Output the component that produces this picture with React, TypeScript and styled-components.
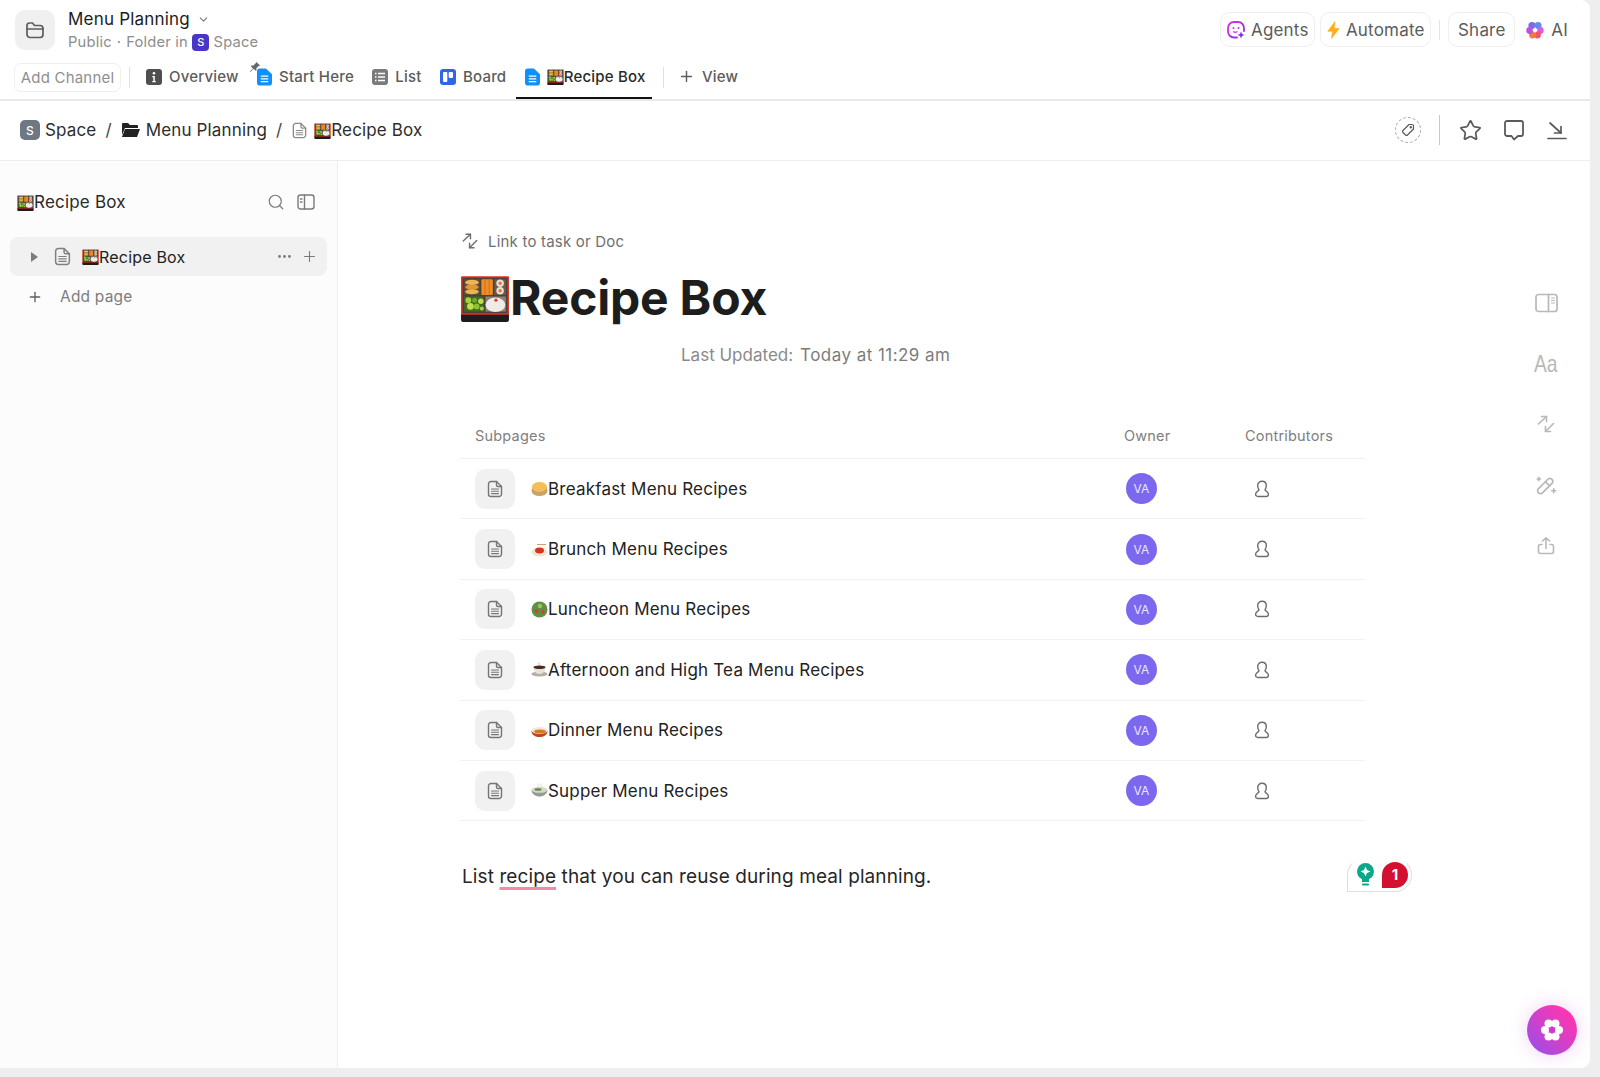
import React from 'react'
import styled, { createGlobalStyle } from 'styled-components'
import { ChevronDown, Ellipsis, Plus, Search, Star } from 'lucide-react'

const GlobalStyle = createGlobalStyle`
  html, body { margin: 0; padding: 0; background: #eeeeee; }
  body { font-family: Inter, "Liberation Sans", sans-serif; color: #1f1f1f; letter-spacing: 0.2px; }
  * { box-sizing: border-box; }
`

const Frame = styled.div`
  position: relative;
  width: 1590px;
  height: 1068px;
  background: #fff;
  border-radius: 0 9px 9px 0;
  display: flex;
  flex-direction: column;
  overflow: hidden;
`

const Header = styled.header`
  height: 101px;
  flex: none;
  border-bottom: 2px solid #e8e8e8;
  display: flex;
  flex-direction: column;
`

const TopRow = styled.div`
  height: 60px;
  display: flex;
  align-items: flex-start;
  padding: 10px 22px 0 15px;
`

const FolderBox = styled.div`
  width: 40px;
  height: 40px;
  border-radius: 10px;
  background: #f0f0f0;
  color: #5d5d5d;
  display: flex;
  align-items: center;
  justify-content: center;
`

const TitleBlock = styled.div`
  margin-left: 13px;
  margin-top: -2px;
  flex: 1;
`

const TitleLine = styled.div`
  display: flex;
  align-items: center;
  gap: 7px;
  height: 22px;
  font-size: 17px;
  font-weight: 400;
  color: #1c1c1c;
  svg { color: #777; }
`

const SubLine = styled.div`
  display: flex;
  align-items: center;
  height: 20px;
  margin-top: 2px;
  font-size: 14.7px;
  color: #8d8d8d;
`

const Dot = styled.span`
  margin: 0 5px;
`

const SpaceBadge = styled.span<{ $size: number; $bg: string }>`
  display: inline-flex;
  align-items: center;
  justify-content: center;
  width: ${({ $size }) => $size}px;
  height: ${({ $size }) => $size}px;
  border-radius: ${({ $size }) => Math.round($size / 4)}px;
  background: ${({ $bg }) => $bg};
  color: #fff;
  font-size: ${({ $size }) => Math.round($size * 0.62)}px;
  font-weight: 500;
  letter-spacing: 0;
  flex: none;
`

const TopActions = styled.div`
  display: flex;
  align-items: center;
  gap: 5px;
  margin-top: 2px;
`

const OutlineButton = styled.div<{ $width: number }>`
  width: ${({ $width }) => $width}px;
  height: 35px;
  border: 1px solid #efefef;
  border-radius: 10px;
  display: flex;
  align-items: center;
  justify-content: center;
  gap: 6px;
  font-size: 17px;
  color: #5c5c5c;
`

const ActionBar = styled.span`
  width: 1px;
  height: 20px;
  margin: 0 3px;
  background: #e4e4e4;
  flex: none;
`

const AiLabel = styled.div`
  display: flex;
  align-items: center;
  gap: 7px;
  margin-left: 6px;
  font-size: 17px;
  color: #5c5c5c;
`

const TabRow = styled.nav`
  height: 39px;
  display: flex;
  align-items: stretch;
  padding-left: 14px;
`

const AddChannel = styled.div`
  width: 107px;
  height: 29px;
  margin-top: 3px;
  border: 1px solid #efefef;
  border-radius: 7px;
  display: flex;
  align-items: center;
  justify-content: center;
  font-size: 15px;
  color: #8f8f8f;
`

const TabBar = styled.span`
  width: 1px;
  height: 21px;
  margin: 7px 7px 0 8px;
  background: #e0e0e0;
  flex: none;
`

const Tab = styled.div<{ $active?: boolean }>`
  position: relative;
  display: flex;
  align-items: center;
  gap: 7px;
  padding: 0 6px 6px 9px;
  margin-right: 3.400px;
  height: 39px;
  font-size: 15px;
  font-weight: 500;
  color: ${({ $active }) => ($active ? '#2a2a2a' : '#5c5c5c')};
  box-shadow: ${({ $active }) => ($active ? 'inset 0 -2px 0 #111' : 'none')};
`

const ViewTab = styled(Tab)`
  padding-left: 7px;
`

const Inline = styled.span`
  display: inline-flex;
  align-items: center;
`

const PinMark = styled.svg`
  position: absolute;
  left: 1px;
  top: 1px;
`

const Breadcrumbs = styled.div`
  height: 60px;
  flex: none;
  border-bottom: 1px solid #eeeeee;
  display: flex;
  align-items: center;
  padding: 0 12px 1px 20px;
  font-size: 17px;
  letter-spacing: 0.15px;
  color: #2d2d2d;
`

const Crumb = styled.span`
  display: inline-flex;
  align-items: center;
  gap: 5px;
`

const DocCrumb = styled(Crumb)`
  gap: 6px;
`

const Slash = styled.span`
  margin: 0 9px;
  color: #444;
`

const CrumbActions = styled.div`
  margin-left: auto;
  display: flex;
  align-items: center;
  color: #5a5a5a;
`

const TagCircle = styled.div`
  width: 26px;
  height: 26px;
  border: 1px dashed #a8a8a8;
  border-radius: 50%;
  display: flex;
  align-items: center;
  justify-content: center;
  color: #5a5a5a;
`

const CrumbBar = styled.span`
  width: 1px;
  height: 30px;
  margin: 0 9px 0 18px;
  background: #c9c9c9;
  flex: none;
`

const CrumbIcon = styled.div`
  width: 43px;
  display: flex;
  justify-content: center;
`

const Body = styled.div`
  flex: 1;
  display: flex;
  min-height: 0;
`

const Sidebar = styled.aside`
  width: 338px;
  flex: none;
  background: #fcfcfc;
  border-right: 1px solid #eeeeee;
  padding: 30px 10px 0;
`

const SideHead = styled.div`
  height: 22px;
  display: flex;
  align-items: center;
  padding: 0 12px 0 7px;
  font-size: 17px;
  color: #2a2a2a;
  margin-bottom: 24px;
`

const SideHeadIcons = styled.div`
  margin-left: auto;
  display: flex;
  gap: 12px;
  color: #7a7a7a;
`

const PageRow = styled.div`
  width: 317px;
  height: 39px;
  border-radius: 8px;
  background: #f1f1f1;
  display: flex;
  align-items: center;
  padding: 0 9px 0 21px;
  font-size: 16px;
  color: #222;
`

const Caret = styled.span`
  width: 0;
  height: 0;
  border-left: 7px solid #7c7c7c;
  border-top: 5.5px solid transparent;
  border-bottom: 5.5px solid transparent;
  margin-right: 15px;
`

const PageTitle = styled.span`
  display: inline-flex;
  align-items: center;
  margin-left: 10px;
`

const RowTools = styled.div`
  margin-left: auto;
  display: flex;
  align-items: center;
  gap: 8px;
  color: #7a7a7a;
`

const AddPage = styled.div`
  height: 41px;
  display: flex;
  align-items: center;
  gap: 17px;
  padding-left: 17px;
  font-size: 15.5px;
  color: #7d7d7d;
  svg { color: #5e5e5e; }
`

const Main = styled.main`
  flex: 1;
  padding: 69px 0 0 122px;
  min-width: 0;
`

const LinkRow = styled.div`
  height: 22px;
  display: flex;
  align-items: center;
  gap: 9px;
  padding-left: 1px;
  font-size: 15px;
  color: #6f6f6f;
`

const PageHeading = styled.h1`
  margin: 14px 0 0;
  height: 62px;
  display: flex;
  align-items: center;
  font-size: 48px;
  font-weight: 700;
  letter-spacing: -0.2px;
  color: #1d1d1d;
`

const Updated = styled.div`
  margin: 15px 0 0 221px;
  height: 24px;
  display: flex;
  align-items: center;
  gap: 7px;
  font-size: 17px;
  letter-spacing: 0;
  color: #8a8a8a;
  span + span { color: #7c7c7c; letter-spacing: 0.45px; }
`

const Table = styled.div`
  width: 905px;
  margin-top: 56px;
`

const tableColumns = `grid-template-columns: 1fr 121px 120px;`

const TableHead = styled.div`
  height: 36px;
  display: grid;
  ${tableColumns}
  align-items: start;
  padding-left: 15px;
  padding-top: 4px;
  font-size: 14.5px;
  color: #808080;
  border-bottom: 1px solid #f1f1f1;
`

const TableRow = styled.div`
  height: 60.4px;
  display: grid;
  ${tableColumns}
  align-items: center;
  padding-left: 15px;
  border-bottom: 1px solid #f1f1f1;
`

const PageCell = styled.div`
  display: flex;
  align-items: center;
  font-size: 17px;
  color: #222;
`

const DocBox = styled.div`
  width: 40px;
  height: 40px;
  border-radius: 10px;
  background: #f1f1f1;
  color: #757575;
  display: flex;
  align-items: center;
  justify-content: center;
  margin-right: 16px;
`

const Avatar = styled.div`
  width: 31px;
  height: 31px;
  margin-left: 2px;
  border-radius: 50%;
  background: #7b68ee;
  color: #e9e6ff;
  font-size: 12px;
  display: flex;
  align-items: center;
  justify-content: center;
`

const Contributor = styled.div`
  padding-left: 9px;
  color: #6c6c6c;
  display: flex;
`

const Paragraph = styled.p`
  position: relative;
  width: 960px;
  margin: 43px 0 0 2px;
  line-height: 26px;
  font-size: 19px;
  letter-spacing: 0.1px;
  color: #262626;
`

const Misspelled = styled.span`
  text-decoration: underline 3px #f58aa6;
  text-underline-offset: 4px;
  text-decoration-skip-ink: none;
`

const GrammarBadge = styled.div`
  position: absolute;
  left: 885px;
  top: -6px;
  width: 65px;
  height: 34px;
  background: #fff;
  border: 1px solid #dcdfe8;
  border-top-color: transparent;
  border-radius: 17px 17px 17px 0;
  display: flex;
  align-items: center;
  gap: 8px;
  padding-left: 9px;
`

const Count = styled.div`
  width: 26px;
  height: 26px;
  background: #d3102f;
  border-radius: 13px 13px 13px 0;
  color: #fff;
  font-size: 15px;
  font-weight: 700;
  display: flex;
  align-items: center;
  justify-content: center;
`

const Rail = styled.aside`
  width: 88px;
  flex: none;
  padding-top: 132px;
  display: flex;
  flex-direction: column;
  align-items: center;
  gap: 40.7px;
  color: #b8b8b8;
`

const RailSlot = styled.div`
  height: 20px;
  display: flex;
  align-items: center;
  justify-content: center;
`

const RailText = styled(RailSlot)`
  font-family: "Liberation Sans", sans-serif;
  font-size: 24px;
  letter-spacing: 0;
  transform: scaleX(0.8);
`

const Fab = styled.div`
  position: absolute;
  left: 1527px;
  top: 1005px;
  width: 50px;
  height: 50px;
  border-radius: 50%;
  background: linear-gradient(45deg, #9a4de8 5%, #ff36b0 85%);
  box-shadow: 0 0 18px rgba(200, 70, 220, 0.25);
  display: flex;
  align-items: center;
  justify-content: center;
`

const stroke = {
  fill: 'none',
  stroke: 'currentColor',
  strokeLinecap: 'round' as const,
  strokeLinejoin: 'round' as const,
}

const FolderIcon = () => (
  <svg width="22" height="22" viewBox="0 0 22 22" {...stroke} strokeWidth="1.7">
    <path d="M3 6.5A2.5 2.5 0 0 1 5.500 4h3l2 2.500h5.500A3 3 0 0 1 19 9.500v6a3 3 0 0 1-3 3H6a3 3 0 0 1-3-3z" />
    <path d="M3 10h16" />
  </svg>
)

const DocIcon = ({ size = 18, color }: { size?: number; color?: string }) => (
  <svg width={size} height={size} viewBox="0 0 18 18" color={color} {...stroke} strokeWidth="1.4">
    <path d="M5 1.500h5.500L15.500 6.500V14a2.500 2.500 0 0 1-2.500 2.500H5A2.500 2.500 0 0 1 2.500 14V4A2.500 2.500 0 0 1 5 1.500z" />
    <path d="M10.500 1.500V5A1.500 1.500 0 0 0 12 6.500h3.500" />
    <path d="M5.500 9h7M5.500 11.300h7M5.500 13.600h7" strokeWidth="1.100" />
  </svg>
)

const LinkArrows = ({ size = 18 }: { size?: number }) => (
  <svg width={size} height={size} viewBox="0 0 20 20" {...stroke} strokeWidth="1.6">
    <path d="M2.500 10 L10.500 2.500" />
    <path d="M5.500 2.500h5v5" />
    <path d="M17.500 9.500 L9.500 17.500" />
    <path d="M14.500 17.500h-5v-5" />
  </svg>
)

const PersonIcon = () => (
  <svg width="16" height="18" viewBox="0 0 16 18" {...stroke} strokeWidth="1.4">
    <path d="M5 9.500C3.800 8.300 3.700 6.800 3.700 5.500 3.700 3 5.600 1.300 8 1.300S12.300 3 12.300 5.500c0 1.300-.1 2.800-1.300 4 0 1 .8 1.400 2 2.300 1 .8 1.400 1.500 1.400 2.500 0 1.300-.8 2.200-2.200 2.200H3.800c-1.400 0-2.200-.9-2.200-2.200 0-1 .4-1.700 1.400-2.500 1.200-.9 2-1.300 2-2.300z" />
  </svg>
)

const TabDoc = () => (
  <svg width="15" height="18" viewBox="0 0 16 18">
    <path d="M3 0h6.500L16 6v9a3 3 0 0 1-3 3H3a3 3 0 0 1-3-3V3a3 3 0 0 1 3-3z" fill="#1090ff" />
    <path d="M4 8h8M4 11h8M4 14h8" stroke="#fff" strokeWidth="1.400" />
  </svg>
)

const OverviewIcon = () => (
  <svg width="16" height="16" viewBox="0 0 16 16">
    <rect width="16" height="16" rx="3" fill="#4f4f4f" />
    <circle cx="8" cy="4.300" r="1.300" fill="#fff" />
    <path d="M6.300 7h2.500v5h1v1.300H6.300V12h1V8.300h-1z" fill="#fff" />
  </svg>
)

const ListIcon = () => (
  <svg width="16" height="16" viewBox="0 0 16 16">
    <rect width="16" height="16" rx="3" fill="#7b7b7b" />
    <path d="M3 4.500h1.500M6 4.500h7M3 8h1.500M6 8h7M3 11.500h1.500M6 11.500h7" stroke="#fff" strokeWidth="1.400" />
  </svg>
)

const BoardIcon = () => (
  <svg width="16" height="16" viewBox="0 0 16 16">
    <rect width="16" height="16" rx="3" fill="#3264e6" />
    <rect x="3" y="3" width="4.300" height="10" rx="1" fill="#fff" />
    <rect x="8.700" y="3" width="4.300" height="6" rx="1" fill="#fff" />
  </svg>
)

const AgentIcon = () => (
  <svg width="18" height="18" viewBox="0 0 18 18" fill="none">
    <defs>
      <linearGradient id="agentGrad" x1="0" y1="0" x2="1" y2="1">
        <stop offset="0" stopColor="#e62ae6" />
        <stop offset="1" stopColor="#8a2cf0" />
      </linearGradient>
    </defs>
    <path d="M10 16.500H7A6 6 0 0 1 1 10.500V7a6 6 0 0 1 6-6h4a6 6 0 0 1 6 6v3" stroke="url(#agentGrad)" strokeWidth="1.800" strokeLinecap="round" />
    <circle cx="6.500" cy="7" r="1" fill="#d62ae6" />
    <circle cx="11.500" cy="7" r="1" fill="#d62ae6" />
    <path d="M6.500 10.800c1 .7 2.500.7 3.500 0" stroke="#d62ae6" strokeWidth="1.300" strokeLinecap="round" />
    <path d="M14 10.500l1 2.500 2.500 1-2.500 1-1 2.500-1-2.500-2.500-1 2.500-1z" fill="#7c2cf0" />
  </svg>
)

const BoltIcon = () => (
  <svg width="13" height="18" viewBox="0 0 13 18">
    <path d="M8 .5L.8 10.300h4.700L4.500 17.500l7.700-10H7.300z" fill="#ffae1a" stroke="#ffae1a" strokeWidth=".6" strokeLinejoin="round" />
  </svg>
)

const AiFlower = () => (
  <svg width="18" height="18" viewBox="0 0 18 18">
    <circle cx="6" cy="4.500" r="3.600" fill="#7b68ee" />
    <circle cx="12" cy="4.500" r="3.600" fill="#5b8ef0" />
    <circle cx="14.300" cy="9.500" r="3.400" fill="#d65ce0" />
    <circle cx="11.500" cy="14" r="3.400" fill="#f0566a" />
    <circle cx="6.500" cy="14" r="3.400" fill="#f07a3c" />
    <circle cx="3.700" cy="9.500" r="3.400" fill="#c04fe0" />
    <path d="M9 5.800l1 2.200 2.200 1-2.200 1-1 2.200-1-2.200-2.200-1 2.200-1z" fill="#fff" />
  </svg>
)

const TagIcon = () => (
  <svg width="14" height="14" viewBox="0 0 14 14" {...stroke} strokeWidth="1.200">
    <path d="M8 1.500h3a1.500 1.500 0 0 1 1.500 1.500v3L6.500 12a1.400 1.400 0 0 1-2 0L2 9.500a1.400 1.400 0 0 1 0-2z" />
    <circle cx="9.800" cy="4.200" r=".6" />
  </svg>
)

const CommentIcon = () => (
  <svg width="22" height="22" viewBox="0 0 22 22" {...stroke} strokeWidth="1.800">
    <path d="M4 2h14a2 2 0 0 1 2 2v11a2 2 0 0 1-2 2h-3l-4 3.500L8.500 17H4a2 2 0 0 1-2-2V4a2 2 0 0 1 2-2z" />
  </svg>
)

const CollapseIcon = () => (
  <svg width="20" height="20" viewBox="0 0 20 20" {...stroke} strokeWidth="1.700">
    <path d="M3 3l11 10" />
    <path d="M14 6.500V13H7.500" />
    <path d="M1 18.500h18" />
  </svg>
)

const SidePanelIcon = () => (
  <svg width="18" height="18" viewBox="0 0 18 18" {...stroke} strokeWidth="1.400">
    <rect x="1" y="2" width="16" height="14" rx="2.500" />
    <path d="M7.500 2v14M3.500 6h1.500M3.500 9h1.500" />
  </svg>
)

const RailPanelIcon = () => (
  <svg width="23" height="20" viewBox="0 0 23 20" {...stroke} strokeWidth="1.700">
    <rect x="1" y="1.500" width="21" height="17" rx="2.500" />
    <path d="M13.500 1.500v17" />
    <path d="M16.500 5h3M16.500 7.500h3M16.500 10h3" strokeWidth="1" />
  </svg>
)

const WandIcon = () => (
  <svg width="22" height="22" viewBox="0 0 20 20" {...stroke} strokeWidth="1.500">
    <path d="M3 13.500l8.500-8.500a2.500 2.500 0 0 1 4 3.500L7 17a2.500 2.500 0 0 1-4-3.500z" />
    <path d="M9.500 7l3.500 3.500" />
    <path d="M3.500 3v3M2 4.500h3M17 13.500v3.500M15.300 15.200h3.500" />
  </svg>
)

const ShareUpIcon = () => (
  <svg width="20" height="20" viewBox="0 0 20 20" {...stroke} strokeWidth="1.600">
    <path d="M6 8.500H4.500A2 2 0 0 0 2.500 10.500v5a2 2 0 0 0 2 2h11a2 2 0 0 0 2-2v-5a2 2 0 0 0-2-2H14" />
    <path d="M10 12.500V2M6.500 5L10 1.800 13.500 5" />
  </svg>
)

const BulbIcon = () => (
  <svg width="17" height="24" viewBox="0 0 17 24">
    <circle cx="8.500" cy="8.500" r="8.500" fill="#0aa88a" />
    <path d="M8.500 3.500l1.500 3.500 3.500 1.500-3.500 1.500-1.500 3.500L7 10 3.500 8.500 7 7z" fill="#fff" />
    <rect x="5" y="16" width="7" height="3" fill="#0aa88a" />
    <rect x="5" y="20.500" width="7" height="2" rx="1" fill="#0aa88a" />
  </svg>
)

const FabFlower = () => (
  <svg width="24" height="24" viewBox="0 0 24 24">
    <circle cx="8.500" cy="5.500" r="4" fill="#fff" />
    <circle cx="15.500" cy="5.500" r="4" fill="#fff" />
    <circle cx="19" cy="12" r="4" fill="#fff" />
    <circle cx="15.500" cy="18.500" r="4" fill="#fff" />
    <circle cx="8.500" cy="18.500" r="4" fill="#fff" />
    <circle cx="5" cy="12" r="4" fill="#fff" />
    <path d="M12 8.500l1.200 2.300 2.300 1.200-2.300 1.200-1.200 2.300-1.200-2.300L8.500 12l2.300-1.200z" fill="#c83bd0" />
  </svg>
)

const BentoEmoji = ({ size }: { size: number }) => (
  <svg width={size} height={size} viewBox="0 -2 48 48">
    <rect x="1" y="37" width="46" height="9" rx="2" fill="#1c1c1c" />
    <rect x="1" y="2" width="46" height="37" rx="1" fill="#e0301e" />
    <rect x="2.500" y="3.500" width="43" height="34" fill="#4a413b" />
    <rect x="4" y="5" width="15" height="15" fill="#5c4c3e" />
    <ellipse cx="11.500" cy="8" rx="6.500" ry="2.600" fill="#eeb650" />
    <ellipse cx="11.500" cy="12.500" rx="6.500" ry="2.600" fill="#dc9a34" />
    <ellipse cx="11.500" cy="17" rx="6.500" ry="2.400" fill="#eeb650" />
    <rect x="20.500" y="5" width="11" height="15" rx="1" fill="#f28c26" />
    <path d="M24 5v15M28 5v15" stroke="#c96a12" strokeWidth=".8" />
    <rect x="33" y="5" width="11" height="15" fill="#6a5b4f" />
    <circle cx="38.500" cy="8.800" r="3.600" fill="#e8e0d4" />
    <circle cx="38.500" cy="8.800" r="1.600" fill="#e8703c" />
    <circle cx="38.500" cy="16" r="3.600" fill="#e8e0d4" />
    <circle cx="38.500" cy="16" r="1.600" fill="#e8703c" />
    <rect x="4" y="21.500" width="19" height="14.500" fill="#3f6a24" />
    <circle cx="8" cy="25" r="2.800" fill="#a9d13c" />
    <circle cx="14" cy="25" r="2.400" fill="#6fa82a" />
    <circle cx="20" cy="26" r="2.600" fill="#c3de4c" />
    <circle cx="10" cy="31" r="3.200" fill="#c3de4c" />
    <circle cx="16" cy="31" r="2.800" fill="#8cc32e" />
    <circle cx="21" cy="33" r="2" fill="#a9d13c" />
    <rect x="24.500" y="21.500" width="19.500" height="14.500" fill="#8c8078" />
    <ellipse cx="34" cy="29.500" rx="9.500" ry="7" fill="#efebe6" />
    <circle cx="34.500" cy="25" r="1.500" fill="#e2392c" />
  </svg>
)

const SmallBento = () => <BentoEmoji size={17} />

type FoodKind = 'pancake' | 'spaghetti' | 'salad' | 'coffee' | 'curry' | 'soup'

const FoodEmoji = ({ kind }: { kind: FoodKind }) => (
  <svg width="17" height="17" viewBox="0 0 17 17">
    {kind === 'pancake' && (
      <>
        <ellipse cx="8.500" cy="10.500" rx="8" ry="5.500" fill="#c9a26a" />
        <ellipse cx="8.500" cy="7" rx="7.500" ry="5" fill="#f3be5a" />
      </>
    )}
    {kind === 'spaghetti' && (
      <>
        <path d="M6 3.500h9" stroke="#c9a26a" strokeWidth="1" />
        <ellipse cx="8.500" cy="11" rx="8" ry="4.500" fill="#efe6d2" />
        <ellipse cx="8.500" cy="9.500" rx="4.500" ry="3" fill="#d8331f" />
      </>
    )}
    {kind === 'salad' && (
      <>
        <circle cx="8.500" cy="8.500" r="8" fill="#5f9045" />
        <circle cx="5.500" cy="10" r="2" fill="#d8402c" />
        <circle cx="12" cy="11" r="1.800" fill="#d8402c" />
        <circle cx="9" cy="5" r="2.200" fill="#9cc45a" />
      </>
    )}
    {kind === 'coffee' && (
      <>
        <path d="M8 1.500c-1 1 1 1.500 0 3" stroke="#bbb" strokeWidth="1" fill="none" />
        <ellipse cx="8.500" cy="13" rx="8" ry="2.500" fill="#b4aea6" />
        <path d="M2.500 6h12c0 4-2 7-6 7s-6-3-6-7z" fill="#e7e2da" />
        <ellipse cx="8.500" cy="6.200" rx="6" ry="1.800" fill="#4b2d1a" />
      </>
    )}
    {kind === 'curry' && (
      <>
        <path d="M.5 9c0 4 4 6 8 6s8-2 8-6z" fill="#b8491f" />
        <ellipse cx="8.500" cy="8.500" rx="8" ry="3.500" fill="#efe7d8" />
        <ellipse cx="9" cy="9.500" rx="6" ry="2" fill="#cf7a27" />
      </>
    )}
    {kind === 'soup' && (
      <>
        <path d="M7 1.500c-1 1 1 1.500 0 3M10 1.500c-1 1 1 1.500 0 3" stroke="#ccc" strokeWidth=".8" fill="none" />
        <path d="M.5 8c0 4 4 6.500 8 6.500s8-2.500 8-6.500z" fill="#9a9a94" />
        <ellipse cx="8.500" cy="7.800" rx="8" ry="3" fill="#d9d5c6" />
        <ellipse cx="7" cy="7.500" rx="3.500" ry="1.200" fill="#4d8f45" />
      </>
    )}
  </svg>
)

const subpages: { kind: FoodKind; title: string }[] = [
  { kind: 'pancake', title: 'Breakfast Menu Recipes' },
  { kind: 'spaghetti', title: 'Brunch Menu Recipes' },
  { kind: 'salad', title: 'Luncheon Menu Recipes' },
  { kind: 'coffee', title: 'Afternoon and High Tea Menu Recipes' },
  { kind: 'curry', title: 'Dinner Menu Recipes' },
  { kind: 'soup', title: 'Supper Menu Recipes' },
]

const App = () => {
  return (
    <Frame>
      <GlobalStyle />
      <Header>
        <TopRow>
          <FolderBox>
            <FolderIcon />
          </FolderBox>
          <TitleBlock>
            <TitleLine>
              Menu Planning <ChevronDown size={13} />
            </TitleLine>
            <SubLine>
              Public<Dot>·</Dot>Folder in&nbsp;
              <SpaceBadge $size={17} $bg="#4a35c9">S</SpaceBadge>
              &nbsp;Space
            </SubLine>
          </TitleBlock>
          <TopActions>
            <OutlineButton $width={95}>
              <AgentIcon /> Agents
            </OutlineButton>
            <OutlineButton $width={111}>
              <BoltIcon /> Automate
            </OutlineButton>
            <ActionBar />
            <OutlineButton $width={67}>Share</OutlineButton>
            <AiLabel>
              <AiFlower /> AI
            </AiLabel>
          </TopActions>
        </TopRow>
        <TabRow>
          <AddChannel>Add Channel</AddChannel>
          <TabBar />
          <Tab>
            <OverviewIcon /> Overview
          </Tab>
          <Tab>
            <PinMark width="12" height="12" viewBox="0 0 13 13">
              <path d="M8 1l4 4-2 .8-2 2 .2 2.200-1 .6-2.200-2.300L1.500 12 1 11.500l3.300-3.500L2 5.800l.6-1 2.200.2 2-2z" fill="#666" />
            </PinMark>
            <TabDoc /> Start Here
          </Tab>
          <Tab>
            <ListIcon /> List
          </Tab>
          <Tab>
            <BoardIcon /> Board
          </Tab>
          <Tab $active>
            <TabDoc />
            <Inline>
              <SmallBento />
              Recipe Box
            </Inline>
          </Tab>
          <TabBar />
          <ViewTab>
            <Plus size={17} /> View
          </ViewTab>
        </TabRow>
      </Header>

      <Breadcrumbs>
        <Crumb>
          <SpaceBadge $size={20} $bg="#6f7783">S</SpaceBadge>
          Space
        </Crumb>
        <Slash>/</Slash>
        <Crumb>
          <svg width="20" height="18" viewBox="0 0 20 18">
            <path d="M1 3a1 1 0 0 1 1-1h5l2 2h7a1 1 0 0 1 1 1v2H4L1 14z" fill="#222" />
            <path d="M4 8h15l-3 8H1z" fill="#222" />
          </svg>
          Menu Planning
        </Crumb>
        <Slash>/</Slash>
        <DocCrumb>
          <DocIcon size={17} color="#8a8a8a" />
          <Inline>
            <SmallBento />
            Recipe Box
          </Inline>
        </DocCrumb>
        <CrumbActions>
          <TagCircle>
            <TagIcon />
          </TagCircle>
          <CrumbBar />
          <CrumbIcon>
            <Star size={23} strokeWidth={1.8} />
          </CrumbIcon>
          <CrumbIcon>
            <CommentIcon />
          </CrumbIcon>
          <CrumbIcon>
            <CollapseIcon />
          </CrumbIcon>
        </CrumbActions>
      </Breadcrumbs>

      <Body>
        <Sidebar>
          <SideHead>
            <SmallBento />
            Recipe Box
            <SideHeadIcons>
              <Search size={18} strokeWidth={1.6} />
              <SidePanelIcon />
            </SideHeadIcons>
          </SideHead>
          <PageRow>
            <Caret />
            <DocIcon size={19} color="#808080" />
            <PageTitle>
              <SmallBento />
              Recipe Box
            </PageTitle>
            <RowTools>
              <Ellipsis size={17} />
              <Plus size={17} strokeWidth={1.5} />
            </RowTools>
          </PageRow>
          <AddPage>
            <Plus size={16} />
            Add page
          </AddPage>
        </Sidebar>

        <Main>
          <LinkRow>
            <LinkArrows />
            Link to task or Doc
          </LinkRow>
          <PageHeading>
            <BentoEmoji size={50} />
            Recipe Box
          </PageHeading>
          <Updated>
            <span>Last Updated:</span>
            <span>Today at 11:29 am</span>
          </Updated>
          <Table>
            <TableHead>
              <span>Subpages</span>
              <span>Owner</span>
              <span>Contributors</span>
            </TableHead>
            {subpages.map(page => (
              <TableRow key={page.title}>
                <PageCell>
                  <DocBox>
                    <DocIcon />
                  </DocBox>
                  <FoodEmoji kind={page.kind} />
                  {page.title}
                </PageCell>
                <Avatar>VA</Avatar>
                <Contributor>
                  <PersonIcon />
                </Contributor>
              </TableRow>
            ))}
          </Table>
          <Paragraph>
            List <Misspelled>recipe</Misspelled> that you can reuse during meal planning.
            <GrammarBadge>
              <BulbIcon />
              <Count>1</Count>
            </GrammarBadge>
          </Paragraph>
        </Main>

        <Rail>
          <RailSlot>
            <RailPanelIcon />
          </RailSlot>
          <RailText>Aa</RailText>
          <RailSlot>
            <LinkArrows size={20} />
          </RailSlot>
          <RailSlot>
            <WandIcon />
          </RailSlot>
          <RailSlot>
            <ShareUpIcon />
          </RailSlot>
        </Rail>
      </Body>

      <Fab>
        <FabFlower />
      </Fab>
    </Frame>
  )
}

export default App
